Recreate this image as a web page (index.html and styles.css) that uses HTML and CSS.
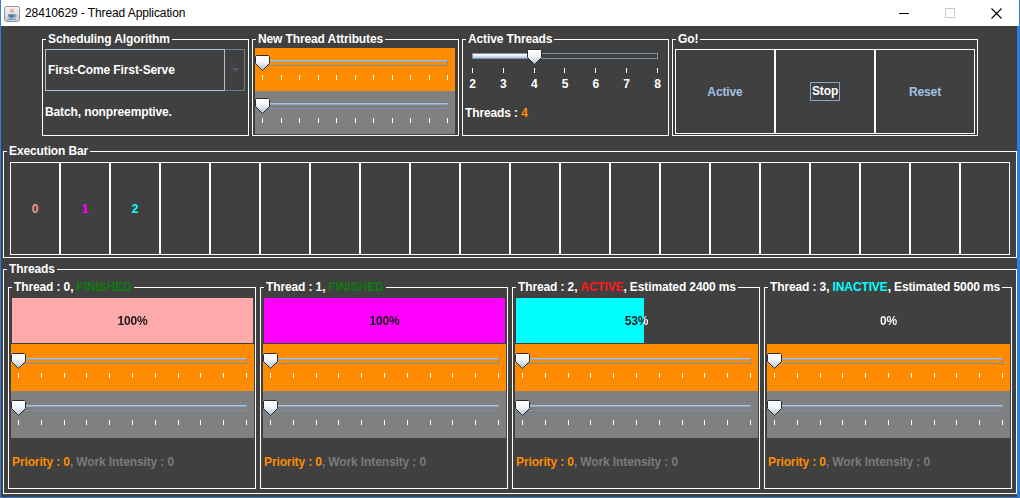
FILE: index.html
```html
<!DOCTYPE html>
<html>
<head>
<meta charset="utf-8">
<title>28410629 - Thread Application</title>
<link rel="stylesheet" href="styles.css">
</head>
<body>
<svg class="defs" width="0" height="0" aria-hidden="true">
  <defs>
    <linearGradient id="thumbGrad" x1="0" y1="0" x2="0" y2="1">
      <stop offset="0" stop-color="#ffffff"/>
      <stop offset="0.45" stop-color="#f2f6fa"/>
      <stop offset="1" stop-color="#a7bcd3"/>
    </linearGradient>
  </defs>
</svg>
<div class="window">
  <header class="titlebar">
    <svg class="app-icon" width="16" height="16" viewBox="0 0 16 16">
      <defs>
        <linearGradient id="icoBg" x1="0" y1="0" x2="0" y2="1">
          <stop offset="0" stop-color="#f4f4f4"/>
          <stop offset="1" stop-color="#c9ced6"/>
        </linearGradient>
      </defs>
      <rect x="0.5" y="0.5" width="15" height="15" rx="2" fill="url(#icoBg)" stroke="#8c96a3"/>
      <path d="M7 3c-1.5 1.2 1.4 1.8-.2 3.3M9 2.6c-2 1.6 1.8 2.2-.4 4" stroke="#e2702a" stroke-width="1" fill="none"/>
      <path d="M4 8.3h7c0 2.6-1.4 3.8-3.5 3.8S4 10.9 4 8.3z" fill="#4f7fa6"/>
      <path d="M11 8.8c1.6 0 1.6 2-.4 2.2" stroke="#4f7fa6" fill="none"/>
      <path d="M3.3 13.2h8.6" stroke="#4f7fa6"/>
    </svg>
    <span class="title">28410629 - Thread Application</span>
    <div class="controls">
      <span class="ctl"><svg width="10" height="10" viewBox="0 0 10 10"><path d="M0 5.5H10" stroke="#000"/></svg></span>
      <span class="ctl"><svg width="10" height="10" viewBox="0 0 10 10"><rect x="0.5" y="0.5" width="9" height="9" fill="none" stroke="#cccccc"/></svg></span>
      <span class="ctl"><svg width="11" height="11" viewBox="0 0 11 11"><path d="M0.5 0.5L10.5 10.5M10.5 0.5L0.5 10.5" stroke="#000" stroke-width="1.1"/></svg></span>
    </div>
  </header>

  <main class="content">
    <div class="top-row">
      <fieldset class="tb panel">
        <legend>Scheduling Algorithm</legend>
        <div class="sched-body">
          <div class="combo">
            <div class="combo-field">First-Come First-Serve</div>
            <div class="combo-btn"><svg width="7" height="4" viewBox="0 0 7 4"><path d="M0 0H7L3.5 4Z" fill="#555a60"/></svg></div>
          </div>
          <div class="desc">Batch, nonpreemptive.</div>
        </div>
      </fieldset>

      <fieldset class="tb panel">
        <legend>New Thread Attributes</legend>
        <div class="attr-body">
          <div class="spanel orange">
            <div class="slider">
              <div class="rail"><div class="track"></div>
                <svg class="thumb" style="left:0%" width="15" height="16" viewBox="0 0 15 16"><path d="M1.5 .5H13.5L14.5 1.5V8.5L7.5 15.5L.5 8.5V1.5Z" fill="url(#thumbGrad)" stroke="#2c2c2c"/></svg>
              </div>
              <div class="ticks"><i></i><i></i><i></i><i></i><i></i><i></i><i></i><i></i><i></i><i></i><i></i></div>
            </div>
          </div>
          <div class="spanel grey">
            <div class="slider">
              <div class="rail"><div class="track"></div>
                <svg class="thumb" style="left:0%" width="15" height="16" viewBox="0 0 15 16"><path d="M1.5 .5H13.5L14.5 1.5V8.5L7.5 15.5L.5 8.5V1.5Z" fill="url(#thumbGrad)" stroke="#2c2c2c"/></svg>
              </div>
              <div class="ticks"><i></i><i></i><i></i><i></i><i></i><i></i><i></i><i></i><i></i><i></i><i></i></div>
            </div>
          </div>
        </div>
      </fieldset>

      <fieldset class="tb panel">
        <legend>Active Threads</legend>
        <div class="active-body">
          <div class="slider labeled">
            <div class="rail"><div class="track"><div class="fill" style="width:30.5%"></div></div>
              <svg class="thumb" style="left:33.33%" width="15" height="16" viewBox="0 0 15 16"><path d="M1.5 .5H13.5L14.5 1.5V8.5L7.5 15.5L.5 8.5V1.5Z" fill="url(#thumbGrad)" stroke="#2c2c2c"/></svg>
            </div>
            <div class="ticks"><i></i><i></i><i></i><i></i><i></i><i></i><i></i></div>
            <div class="labels"><b>2</b><b>3</b><b>4</b><b>5</b><b>6</b><b>7</b><b>8</b></div>
          </div>
          <div class="count">Threads : <span class="orange-t">4</span></div>
        </div>
      </fieldset>

      <fieldset class="tb panel go">
        <legend>Go!</legend>
        <div class="go-body">
          <div class="gbtn">Active</div>
          <div class="gbtn stop"><span class="focus">Stop</span></div>
          <div class="gbtn">Reset</div>
        </div>
      </fieldset>
    </div>

    <fieldset class="tb exec">
      <legend>Execution Bar</legend>
      <div class="cells">
        <div class="cell"><span class="c0">0</span></div>
        <div class="cell"><span class="c1">1</span></div>
        <div class="cell"><span class="c2">2</span></div>
        <div class="cell"></div><div class="cell"></div><div class="cell"></div><div class="cell"></div>
        <div class="cell"></div><div class="cell"></div><div class="cell"></div><div class="cell"></div>
        <div class="cell"></div><div class="cell"></div><div class="cell"></div><div class="cell"></div>
        <div class="cell"></div><div class="cell"></div><div class="cell"></div><div class="cell"></div>
        <div class="cell"></div>
      </div>
    </fieldset>

    <fieldset class="tb threads">
      <legend>Threads</legend>
      <div class="tgrid">
        <fieldset class="tb tbox">
          <legend>Thread : 0, <span class="st-fin">FINISHED</span></legend>
          <div class="tbody">
            <div class="pbar pink" style="--p:100%"><span class="plabel">100%</span></div>
            <div class="spanel orange">
              <div class="slider">
                <div class="rail"><div class="track"></div>
                  <svg class="thumb" style="left:0%" width="15" height="16" viewBox="0 0 15 16"><path d="M1.5 .5H13.5L14.5 1.5V8.5L7.5 15.5L.5 8.5V1.5Z" fill="url(#thumbGrad)" stroke="#2c2c2c"/></svg>
                </div>
                <div class="ticks"><i></i><i></i><i></i><i></i><i></i><i></i><i></i><i></i><i></i><i></i><i></i></div>
              </div>
            </div>
            <div class="spanel grey">
              <div class="slider">
                <div class="rail"><div class="track"></div>
                  <svg class="thumb" style="left:0%" width="15" height="16" viewBox="0 0 15 16"><path d="M1.5 .5H13.5L14.5 1.5V8.5L7.5 15.5L.5 8.5V1.5Z" fill="url(#thumbGrad)" stroke="#2c2c2c"/></svg>
                </div>
                <div class="ticks"><i></i><i></i><i></i><i></i><i></i><i></i><i></i><i></i><i></i><i></i><i></i></div>
              </div>
            </div>
            <div class="info"><span class="orange-t">Priority : 0</span>, Work Intensity : 0</div>
          </div>
        </fieldset>

        <fieldset class="tb tbox">
          <legend>Thread : 1, <span class="st-fin">FINISHED</span></legend>
          <div class="tbody">
            <div class="pbar magenta" style="--p:100%"><span class="plabel">100%</span></div>
            <div class="spanel orange">
              <div class="slider">
                <div class="rail"><div class="track"></div>
                  <svg class="thumb" style="left:0%" width="15" height="16" viewBox="0 0 15 16"><path d="M1.5 .5H13.5L14.5 1.5V8.5L7.5 15.5L.5 8.5V1.5Z" fill="url(#thumbGrad)" stroke="#2c2c2c"/></svg>
                </div>
                <div class="ticks"><i></i><i></i><i></i><i></i><i></i><i></i><i></i><i></i><i></i><i></i><i></i></div>
              </div>
            </div>
            <div class="spanel grey">
              <div class="slider">
                <div class="rail"><div class="track"></div>
                  <svg class="thumb" style="left:0%" width="15" height="16" viewBox="0 0 15 16"><path d="M1.5 .5H13.5L14.5 1.5V8.5L7.5 15.5L.5 8.5V1.5Z" fill="url(#thumbGrad)" stroke="#2c2c2c"/></svg>
                </div>
                <div class="ticks"><i></i><i></i><i></i><i></i><i></i><i></i><i></i><i></i><i></i><i></i><i></i></div>
              </div>
            </div>
            <div class="info"><span class="orange-t">Priority : 0</span>, Work Intensity : 0</div>
          </div>
        </fieldset>

        <fieldset class="tb tbox">
          <legend>Thread : 2, <span class="st-act">ACTIVE</span>, Estimated 2400 ms</legend>
          <div class="tbody">
            <div class="pbar cyan" style="--p:53%"><span class="plabel">53%</span></div>
            <div class="spanel orange">
              <div class="slider">
                <div class="rail"><div class="track"></div>
                  <svg class="thumb" style="left:0%" width="15" height="16" viewBox="0 0 15 16"><path d="M1.5 .5H13.5L14.5 1.5V8.5L7.5 15.5L.5 8.5V1.5Z" fill="url(#thumbGrad)" stroke="#2c2c2c"/></svg>
                </div>
                <div class="ticks"><i></i><i></i><i></i><i></i><i></i><i></i><i></i><i></i><i></i><i></i><i></i></div>
              </div>
            </div>
            <div class="spanel grey">
              <div class="slider">
                <div class="rail"><div class="track"></div>
                  <svg class="thumb" style="left:0%" width="15" height="16" viewBox="0 0 15 16"><path d="M1.5 .5H13.5L14.5 1.5V8.5L7.5 15.5L.5 8.5V1.5Z" fill="url(#thumbGrad)" stroke="#2c2c2c"/></svg>
                </div>
                <div class="ticks"><i></i><i></i><i></i><i></i><i></i><i></i><i></i><i></i><i></i><i></i><i></i></div>
              </div>
            </div>
            <div class="info"><span class="orange-t">Priority : 0</span>, Work Intensity : 0</div>
          </div>
        </fieldset>

        <fieldset class="tb tbox">
          <legend>Thread : 3, <span class="st-inact">INACTIVE</span>, Estimated 5000 ms</legend>
          <div class="tbody">
            <div class="pbar cyan" style="--p:0%"><span class="plabel">0%</span></div>
            <div class="spanel orange">
              <div class="slider">
                <div class="rail"><div class="track"></div>
                  <svg class="thumb" style="left:0%" width="15" height="16" viewBox="0 0 15 16"><path d="M1.5 .5H13.5L14.5 1.5V8.5L7.5 15.5L.5 8.5V1.5Z" fill="url(#thumbGrad)" stroke="#2c2c2c"/></svg>
                </div>
                <div class="ticks"><i></i><i></i><i></i><i></i><i></i><i></i><i></i><i></i><i></i><i></i><i></i></div>
              </div>
            </div>
            <div class="spanel grey">
              <div class="slider">
                <div class="rail"><div class="track"></div>
                  <svg class="thumb" style="left:0%" width="15" height="16" viewBox="0 0 15 16"><path d="M1.5 .5H13.5L14.5 1.5V8.5L7.5 15.5L.5 8.5V1.5Z" fill="url(#thumbGrad)" stroke="#2c2c2c"/></svg>
                </div>
                <div class="ticks"><i></i><i></i><i></i><i></i><i></i><i></i><i></i><i></i><i></i><i></i><i></i></div>
              </div>
            </div>
            <div class="info"><span class="orange-t">Priority : 0</span>, Work Intensity : 0</div>
          </div>
        </fieldset>
      </div>
    </fieldset>
  </main>
</div>
</body>
</html>
```

FILE: styles.css
```css
* { box-sizing: border-box; }
html, body { margin: 0; padding: 0; }
body {
  width: 1020px;
  height: 498px;
  overflow: hidden;
  background: #ffffff;
  font-family: "Liberation Sans", Arial, sans-serif;
}
.defs { position: absolute; width: 0; height: 0; }

.window {
  width: 1020px;
  height: 498px;
  display: flex;
  flex-direction: column;
  border-left: 1px solid #2b7fd6;
  border-right: 1px solid #2b7fd6;
  border-bottom: 1px solid #2b7fd6;
}

/* Title bar */
.titlebar {
  height: 26px;
  flex: none;
  display: flex;
  align-items: center;
  background: #ffffff;
}
.app-icon { margin-left: 3px; margin-top: 2px; flex: none; }
.title {
  margin-left: 5px;
  font-size: 12px;
  color: #000;
  letter-spacing: -0.1px;
}
.controls { margin-left: auto; display: flex; height: 26px; }
.ctl {
  width: 46px;
  height: 26px;
  display: flex;
  align-items: center;
  justify-content: center;
}
.ctl svg { display: block; }

/* Content */
.content {
  flex: 1;
  background: #404040;
  padding: 6px 0 0 2px;
  display: flex;
  flex-direction: column;
  border-right: 2px solid #2b7fd6;
  font-size: 12px;
  font-weight: bold;
  color: #ffffff;
  letter-spacing: -0.12px;
}

.tb {
  margin: 0;
  padding: 0;
  border: 1px solid #ffffff;
  min-width: 0;
}
.tb > legend {
  margin-left: 3px;
  padding: 0 2px;
  font-size: 12px;
  line-height: 14px;
  font-weight: bold;
  color: #ffffff;
  white-space: nowrap;
}

.top-row {
  display: flex;
  gap: 3px;
  padding-left: 39px;
}
.panel { width: 207px; height: 104px; }
.panel.go { width: 306px; }

/* Scheduling */
.sched-body { padding: 3px 3px 0 2px; }
.combo { display: flex; height: 42px; width: 200px; }
.combo-field {
  flex: 1;
  border: 1px solid #a9c2da;
  padding-left: 2px;
  display: flex;
  align-items: center;
  color: #ffffff;
}
.combo-btn {
  width: 20px;
  border: 1px solid #6b7e90;
  border-left: none;
  display: flex;
  align-items: center;
  justify-content: center;
}
.combo-btn svg { display: block; margin-left: 1px; }
.desc { margin-top: 14px; line-height: 14px; }

/* Slider panels */
.attr-body { padding: 2px 3px 0 2px; }
.spanel {
  height: 43px;
  display: flex;
  align-items: center;
}
.spanel.orange { background: #ff8c00; }
.spanel.grey { background: #808080; }

.slider {
  flex: 1;
  height: 29px;
  padding: 0 7px;
}
.rail { position: relative; height: 15px; padding-top: 5px; }
.track {
  height: 6px;
  margin-left: 1px;
  border: 1px solid #7b8fa4;
  border-top-color: #a8c2dc;
  box-shadow: inset 0 1px 0 #8aa6c2;
}
.thumb {
  position: absolute;
  top: 0;
  margin-left: -7px;
  display: block;
}
.ticks {
  display: flex;
  justify-content: space-between;
  margin-top: 5px;
  height: 5px;
}
.ticks i { display: block; width: 1px; height: 5px; background: #ffffff; }

/* Active threads */
.active-body { padding: 3px 3px 0 2px; }
.slider.labeled { height: auto; }
.slider.labeled .rail { padding-top: 4px; }
.slider.labeled .track {
  margin-left: 0;
  border: 1px solid #7f93a8;
  box-shadow: none;
  background: transparent;
}
.slider.labeled .fill {
  height: 100%;
  background: linear-gradient(#ffffff, #dfe8f2 50%, #a9bfd8);
}
.slider.labeled .ticks { margin-top: 4px; }
.labels {
  display: flex;
  justify-content: space-between;
  margin-top: 4px;
  line-height: 14px;
}
.labels b { width: 1px; display: flex; justify-content: center; font-weight: bold; }
.count { margin-top: 15px; line-height: 14px; }
.orange-t { color: #ff8c00; }

/* Go buttons */
.go-body { display: flex; padding: 3px 2px 0 2px; }
.gbtn {
  width: 100px;
  height: 85px;
  border: 1px solid #ffffff;
  display: flex;
  align-items: center;
  justify-content: center;
  color: #a3c1e3;
}
.gbtn.stop { color: #ffffff; }
.focus {
  border: 1px solid #8aa9c8;
  padding: 2px 1px 2px 1px;
  line-height: 13px;
}

/* Execution bar */
.exec { margin-top: 8px; width: 1014px; height: 114px; }
.cells { display: flex; padding: 4px 6px 0 6px; }
.cell {
  width: 50px;
  height: 93px;
  border: 1px solid #ffffff;
  display: flex;
  align-items: center;
  justify-content: center;
}
.c0 { color: #f09a8c; }
.c1 { color: #ff00ff; }
.c2 { color: #00ffff; }

/* Threads */
.threads { margin-top: 4px; width: 1014px; height: 232px; }
.tgrid {
  display: grid;
  grid-template-columns: repeat(4, 248px);
  gap: 4px;
  padding: 4px 4px 0 4px;
}
.tbox { height: 209px; }
.st-fin { color: #0e7a0e; }
.st-act { color: #ff1a1a; }
.st-inact { color: #00ffff; }
.tbody {
  display: grid;
  grid-template-rows: repeat(4, 47px);
  padding: 3px 1px 0 2px;
}
.tbody .spanel { height: 47px; }

/* Progress bars: fill and two-tone label driven by --p */
.pbar {
  --fill: #00ffff;
  border: 1px solid #404040;
  display: flex;
  align-items: center;
  background: linear-gradient(to right, var(--fill) var(--p), #404040 var(--p));
}
.pbar.pink { --fill: #ffaaaa; }
.pbar.magenta { --fill: #ff00ff; }
.pbar.cyan { --fill: #00ffff; }
.plabel {
  width: 100%;
  text-align: center;
  line-height: 14px;
  color: transparent;
  background: linear-gradient(to right, #1a1a1a var(--p), #ffffff var(--p));
  -webkit-background-clip: text;
  background-clip: text;
}
.info {
  display: flex;
  align-items: center;
  padding-left: 1px;
  color: #7a7a7a;
  white-space: pre;
}
```
